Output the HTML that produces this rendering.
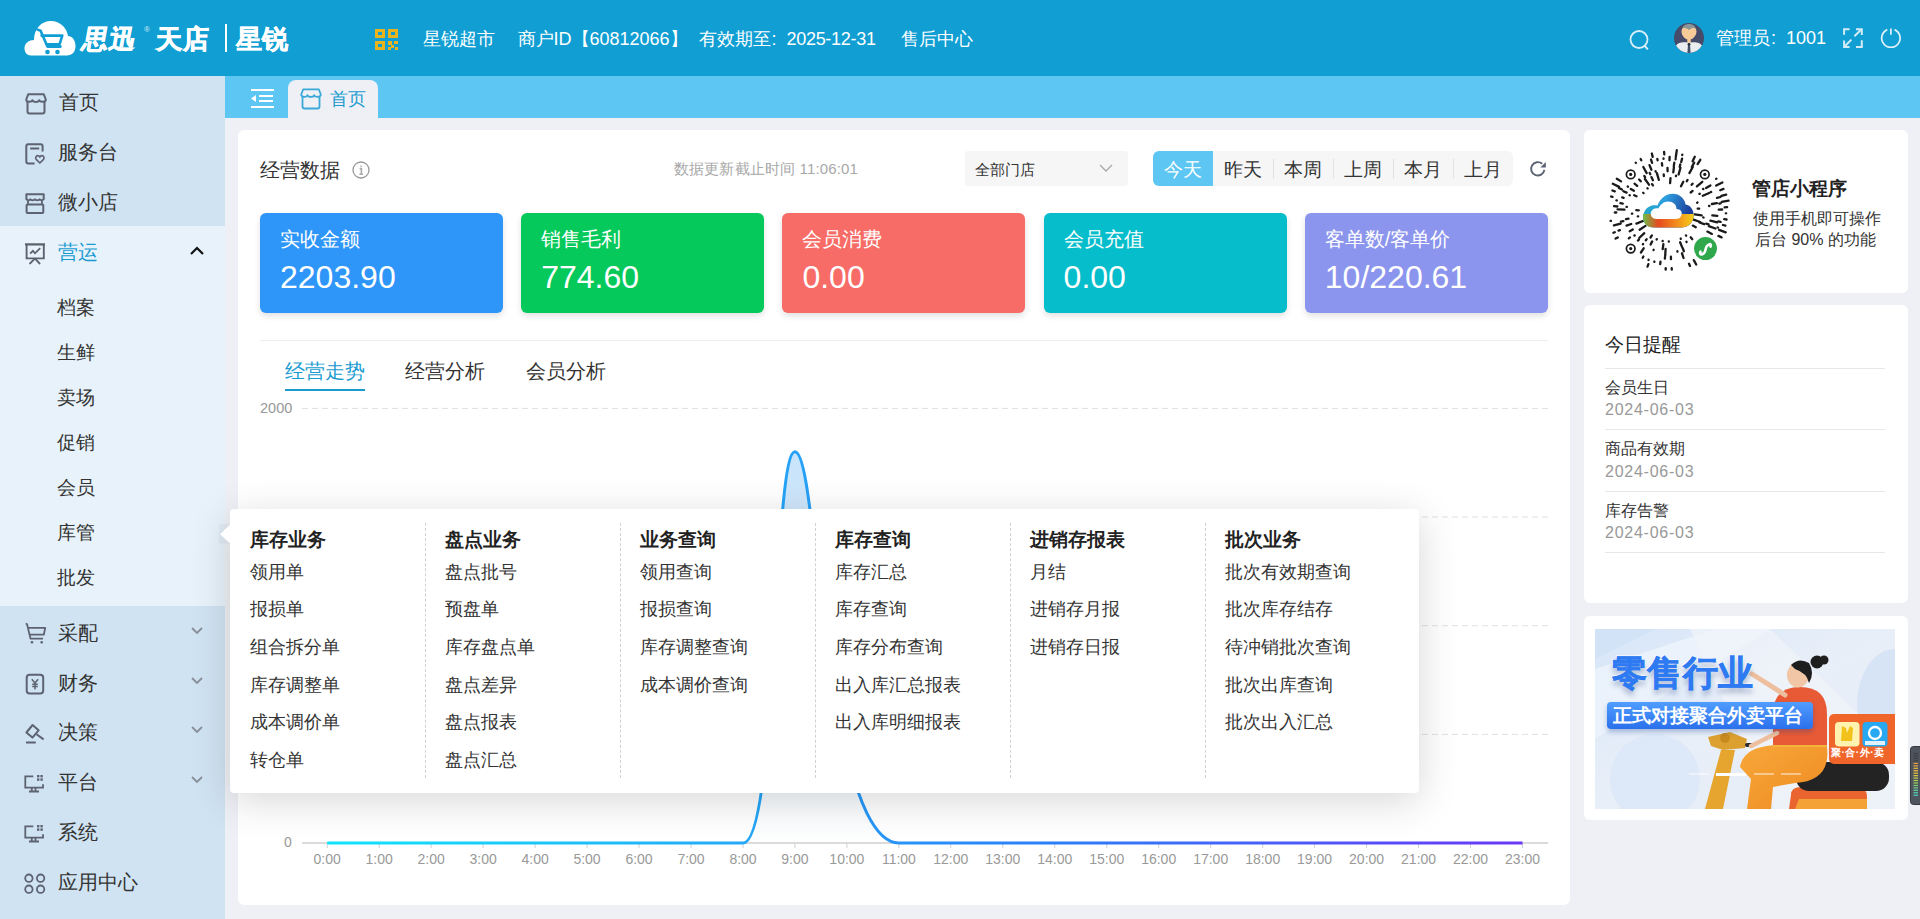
<!DOCTYPE html>
<html><head><meta charset="utf-8"><style>
html,body{margin:0;padding:0;width:1920px;height:919px;overflow:hidden;background:#eef0f5;font-family:"Liberation Sans",sans-serif}
.t{position:absolute;white-space:nowrap}
</style></head><body>
<div style="position:absolute;left:0;top:0;width:1920px;height:76px;background:#109ed3"></div><svg style="position:absolute;left:22px;top:18px" width="58" height="42" viewBox="0 0 58 42">
<path d="M9,37.5 C4,37.5 2.5,33 2.5,30 C2.5,25 7,22 12,22 C12,11 19,3 29,3 C38,3 45,10 46,18 C50,18 53.5,22 53.5,28 C53.5,34 50,37.5 45,37.5 Z" fill="#fff"/>
<path d="M15.5,11.6 L18.6,12.8 L25.4,28.6 H38.5 M19.6,17.6 H40.3 L37.6,26.2 H24.2" fill="none" stroke="#109ed3" stroke-width="2.6" stroke-linejoin="round" stroke-linecap="round"/>
<circle cx="25.5" cy="34" r="2.3" fill="#109ed3"/><circle cx="35.5" cy="34" r="2.3" fill="#109ed3"/>
</svg><div class="t" style="left:83px;top:26.0px;font-size:26px;line-height:26px;color:#fff;font-weight:900;transform:skewX(-10deg);-webkit-text-stroke:0.7px #fff;letter-spacing:1px">思迅</div><div class="t" style="left:144px;top:26.0px;font-size:8px;line-height:8px;color:#d8eef8;font-weight:normal;">®</div><div class="t" style="left:156px;top:26.0px;font-size:26px;line-height:26px;color:#fff;font-weight:900;-webkit-text-stroke:0.7px #fff;letter-spacing:1px">天店</div><div style="position:absolute;left:224.5px;top:24px;width:2.5px;height:28px;background:#fff"></div><div class="t" style="left:236px;top:26.0px;font-size:26px;line-height:26px;color:#fff;font-weight:900;-webkit-text-stroke:0.5px #fff">星锐</div><svg style="position:absolute;left:375px;top:29px" width="23" height="21" viewBox="0 0 23 21">
<g fill="none" stroke="#e8b41e" stroke-width="3"><rect x="1.5" y="1.5" width="7" height="6"/><rect x="14.5" y="1.5" width="7" height="6"/><rect x="1.5" y="13.5" width="7" height="6"/></g>
<rect x="13" y="12" width="4" height="4" fill="#e8b41e"/><rect x="19" y="12" width="4" height="3" fill="#e8b41e"/><rect x="16" y="16" width="3" height="3" fill="#e8b41e"/><rect x="20" y="18" width="3" height="3" fill="#e8b41e"/><rect x="13" y="18" width="3" height="3" fill="#e8b41e"/>
</svg><div class="t" style="left:422.5px;top:30.0px;font-size:18px;line-height:18px;color:#fff;font-weight:normal;">星锐超市</div><div class="t" style="left:517.5px;top:30.0px;font-size:18px;line-height:18px;color:#fff;font-weight:normal;">商户ID【60812066】</div><div class="t" style="left:698.5px;top:30.0px;font-size:18px;line-height:18px;color:#fff;font-weight:normal;">有效期至<span style="margin-left:1px;margin-right:10px">:</span><span style="letter-spacing:-0.3px">2025-12-31</span></div><div class="t" style="left:900.5px;top:30.0px;font-size:18px;line-height:18px;color:#fff;font-weight:normal;">售后中心</div><svg style="position:absolute;left:1628px;top:28px" width="24" height="24" viewBox="0 0 24 24"><circle cx="11" cy="11.5" r="8.5" fill="none" stroke="#d8eef8" stroke-width="1.8"/><path d="M16.6,17.6 L19.8,21.4" stroke="#d8eef8" stroke-width="2"/></svg><svg style="position:absolute;left:1674px;top:23px" width="30" height="30" viewBox="0 0 30 30">
<defs><clipPath id="av"><circle cx="15" cy="15" r="15"/></clipPath></defs>
<g clip-path="url(#av)"><rect width="30" height="30" fill="#464b69"/>
<path d="M8,7 C8,-1 22,-1 22,7 L22,9 C19,6 11,6 8,9 Z" fill="#8a9794"/>
<path d="M7.5,8.5 C7.5,4.5 11,4 15,7 C19,4 22.5,4.5 22.5,8.5 C22.5,12.5 19,16.7 15,16.7 C11,16.7 7.5,12.5 7.5,8.5 Z" fill="#f7cb98"/>
<rect x="13.3" y="15" width="3.4" height="5" fill="#f7cb98"/>
<path d="M1.5,24 C3,19.5 8,19 13.5,19.5 L15,21 L16.5,19.5 C22,19 27,19.5 28.5,24 C26,29.5 20,31 15,31 C10,31 4,29.5 1.5,24 Z" fill="#e9edef"/>
<path d="M14,21 H16 L16.6,30 H13.4 Z" fill="#415067"/><circle cx="15" cy="21.3" r="1.4" fill="#263040"/>
</g></svg><div class="t" style="left:1716px;top:29.0px;font-size:18px;line-height:18px;color:#fff;font-weight:normal;">管理员<span style="margin-left:1px;margin-right:10px">:</span>1001</div><svg style="position:absolute;left:1842px;top:27px" width="22" height="22" viewBox="0 0 22 22"><g fill="none" stroke="#d3ebf6" stroke-width="2">
<path d="M2.1,7.7 V2.2 H7.6"/><path d="M14,2.2 H19.8 V8"/><path d="M19.8,13.3 V19.9 H14"/><path d="M7.6,19.9 H2.1 V13.6"/><path d="M12.4,9.2 L19,2.8"/><path d="M9.4,12.6 L2.8,19.2"/></g></svg><svg style="position:absolute;left:1879px;top:27px" width="24" height="24" viewBox="0 0 24 24"><g fill="none" stroke="#dff1f9" stroke-width="1.7"><path d="M8.3,2.6 A9.2,9.2 0 1 0 15.5,2.6"/><path d="M11.9,1.4 V7.7"/></g></svg><div style="position:absolute;left:0;top:76px;width:225px;height:843px;background:#d0e3f2"></div><div style="position:absolute;left:0;top:226px;width:225px;height:380px;background:#e7f2fa"></div><svg style="position:absolute;left:24px;top:92px" width="24" height="24"><path d="M2.2,7.5 L4.2,2.3 H19.8 L21.8,7.5 C21.8,10.5 16,10.5 15.2,8.2 C14.5,10.5 9.2,10.5 8.5,8.2 C7.7,10.5 2.2,10.5 2.2,7.5 Z" fill="none" stroke="#5d6371" stroke-width="2" stroke-linejoin="round"/><path d="M3.5,9.8 V19.5 Q3.5,21.5 5.5,21.5 H18.5 Q20.5,21.5 20.5,19.5 V9.8" fill="none" stroke="#5d6371" stroke-width="2"/></svg><div class="t" style="left:59px;top:92.0px;font-size:20px;line-height:20px;color:#333;font-weight:normal;">首页</div><svg style="position:absolute;left:24px;top:142px" width="24" height="24"><path d="M10.6,21.6 H4.3 Q2.3,21.6 2.3,19.6 V4.3 Q2.3,2.3 4.3,2.3 H16.6 Q18.6,2.3 18.6,4.3 V9.6 M6.1,6.6 H15.2" fill="none" stroke="#5d6371" stroke-width="2"/><path d="M15.85,21 L12.2,17.3 C11,15.9 12,13.7 13.8,13.7 C14.8,13.7 15.4,14.3 15.85,15 C16.3,14.3 16.9,13.7 17.9,13.7 C19.7,13.7 20.7,15.9 19.5,17.3 Z" fill="none" stroke="#5d6371" stroke-width="1.7" stroke-linejoin="round"/></svg><div class="t" style="left:58px;top:142.0px;font-size:20px;line-height:20px;color:#333;font-weight:normal;">服务台</div><svg style="position:absolute;left:24px;top:192px" width="24" height="24"><path d="M2.4,7.2 V2.3 H19.7 V7.2 C18.5,8.6 16.6,8.6 15.7,7.3 C14.8,8.6 11.9,8.6 11,7.3 C10.1,8.6 7.3,8.6 6.4,7.3 C5.5,8.6 3.4,8.6 2.4,7.2 Z" fill="none" stroke="#5d6371" stroke-width="2" stroke-linejoin="round"/><path d="M4,8.5 V12.5 M17.9,8.5 V12.5" stroke="#5d6371" stroke-width="1.8"/><rect x="2.6" y="12.4" width="16.7" height="8.7" rx="0.8" fill="none" stroke="#5d6371" stroke-width="2"/></svg><div class="t" style="left:58px;top:192.0px;font-size:20px;line-height:20px;color:#333;font-weight:normal;">微小店</div><svg style="position:absolute;left:24px;top:242px" width="24" height="24"><path d="M1,2.4 H21" stroke="#5d6371" stroke-width="2.3"/><path d="M2.6,3 V16.4 H19.8 V3" fill="none" stroke="#5d6371" stroke-width="1.9"/><path d="M6.1,11.7 L8.9,8.9 L11,11.3 L16.2,6.1" fill="none" stroke="#5d6371" stroke-width="1.8"/><path d="M10.6,16.9 L6.1,21.4 M11.3,16.9 L15.5,21.4" stroke="#5d6371" stroke-width="2" stroke-linecap="round"/></svg><div class="t" style="left:58px;top:242.0px;font-size:20px;line-height:20px;color:#1a9bd0;font-weight:normal;">营运</div><svg style="position:absolute;left:189px;top:245px" width="16" height="12" viewBox="0 0 16 12"><path d="M2,9 L8,3 L14,9" fill="none" stroke="#111" stroke-width="2.2"/></svg><div class="t" style="left:57px;top:297.5px;font-size:19px;line-height:19px;color:#333;font-weight:normal;">档案</div><div class="t" style="left:57px;top:342.5px;font-size:19px;line-height:19px;color:#333;font-weight:normal;">生鲜</div><div class="t" style="left:57px;top:387.5px;font-size:19px;line-height:19px;color:#333;font-weight:normal;">卖场</div><div class="t" style="left:57px;top:432.5px;font-size:19px;line-height:19px;color:#333;font-weight:normal;">促销</div><div class="t" style="left:57px;top:477.5px;font-size:19px;line-height:19px;color:#333;font-weight:normal;">会员</div><div class="t" style="left:57px;top:522.5px;font-size:19px;line-height:19px;color:#333;font-weight:normal;">库管</div><div class="t" style="left:57px;top:567.5px;font-size:19px;line-height:19px;color:#333;font-weight:normal;">批发</div><svg style="position:absolute;left:24px;top:621px" width="24" height="24"><path d="M1.7,2.6 L3,3 L6.5,17.6 H19 M4.5,6.8 H21.2 L19.8,13.7 H6.2" fill="none" stroke="#5d6371" stroke-width="1.8" stroke-linejoin="round"/><circle cx="8" cy="21.3" r="1.3" fill="#5d6371"/><circle cx="17.7" cy="21.3" r="1.3" fill="#5d6371"/></svg><div class="t" style="left:58px;top:623.0px;font-size:20px;line-height:20px;color:#333;font-weight:normal;">采配</div><svg style="position:absolute;left:189px;top:624px" width="16" height="12" viewBox="0 0 16 12"><path d="M3,4 L8,9 L13,4" fill="none" stroke="#8a9099" stroke-width="1.8"/></svg><svg style="position:absolute;left:24px;top:672px" width="24" height="24"><rect x="2.7" y="2.8" width="16.5" height="18.6" rx="3" fill="none" stroke="#5d6371" stroke-width="2"/><path d="M7.8,7.2 L11,11 L14.1,7.2 M11,11 V17.5 M8.2,12.2 H13.8 M8.2,14.6 H13.8" fill="none" stroke="#5d6371" stroke-width="1.5"/></svg><div class="t" style="left:58px;top:673.0px;font-size:20px;line-height:20px;color:#333;font-weight:normal;">财务</div><svg style="position:absolute;left:189px;top:674px" width="16" height="12" viewBox="0 0 16 12"><path d="M3,4 L8,9 L13,4" fill="none" stroke="#8a9099" stroke-width="1.8"/></svg><svg style="position:absolute;left:24px;top:720px" width="24" height="24"><path d="M8.6,5 L14.6,10.3 L8.4,17.6 L2.4,12.5 Z" fill="none" stroke="#5d6371" stroke-width="2" stroke-linejoin="round"/><path d="M12.5,14.3 L19.6,19.4 M2,22.4 H11.8" stroke="#5d6371" stroke-width="2"/></svg><div class="t" style="left:58px;top:722.0px;font-size:20px;line-height:20px;color:#333;font-weight:normal;">决策</div><svg style="position:absolute;left:189px;top:723px" width="16" height="12" viewBox="0 0 16 12"><path d="M3,4 L8,9 L13,4" fill="none" stroke="#8a9099" stroke-width="1.8"/></svg><svg style="position:absolute;left:24px;top:774px" width="24" height="24"><path d="M9.3,2.3 H1.3 V13.6 H19 V10.2 M7.8,13.6 V17.5 M11.5,13.6 V17.5 M5,17.5 H15" fill="none" stroke="#5d6371" stroke-width="1.8"/><rect x="13" y="1" width="2.4" height="2.4" fill="#5d6371"/><rect x="16.4" y="1" width="2.4" height="2.4" fill="#5d6371"/><rect x="13" y="4.4" width="2.4" height="2.4" fill="#5d6371"/><rect x="16.4" y="4.4" width="2.4" height="2.4" fill="#5d6371"/></svg><div class="t" style="left:58px;top:772.0px;font-size:20px;line-height:20px;color:#333;font-weight:normal;">平台</div><svg style="position:absolute;left:189px;top:773px" width="16" height="12" viewBox="0 0 16 12"><path d="M3,4 L8,9 L13,4" fill="none" stroke="#8a9099" stroke-width="1.8"/></svg><svg style="position:absolute;left:24px;top:824px" width="24" height="24"><path d="M9.3,2.3 H1.3 V13.6 H19 V10.2 M7.8,13.6 V17.5 M11.5,13.6 V17.5 M5,17.5 H15" fill="none" stroke="#5d6371" stroke-width="1.8"/><rect x="13" y="1" width="2.4" height="2.4" fill="#5d6371"/><rect x="16.4" y="1" width="2.4" height="2.4" fill="#5d6371"/><rect x="13" y="4.4" width="2.4" height="2.4" fill="#5d6371"/><rect x="16.4" y="4.4" width="2.4" height="2.4" fill="#5d6371"/></svg><div class="t" style="left:58px;top:822.0px;font-size:20px;line-height:20px;color:#333;font-weight:normal;">系统</div><svg style="position:absolute;left:24px;top:872px" width="24" height="24"><circle cx="4.9" cy="6.2" r="3.7" fill="none" stroke="#5d6371" stroke-width="1.8"/><circle cx="16.6" cy="6.2" r="3.7" fill="none" stroke="#5d6371" stroke-width="1.8"/><circle cx="4.9" cy="17.2" r="3.7" fill="none" stroke="#5d6371" stroke-width="1.8"/><circle cx="16.6" cy="17.2" r="3.7" fill="none" stroke="#5d6371" stroke-width="1.8"/></svg><div class="t" style="left:58px;top:872.0px;font-size:20px;line-height:20px;color:#333;font-weight:normal;">应用中心</div><div style="position:absolute;left:225px;top:76px;width:1695px;height:42px;background:#5dc6f3"></div><svg style="position:absolute;left:250px;top:88px" width="26" height="22" viewBox="0 0 26 22"><g fill="#fff">
<rect x="1" y="1" width="23" height="2"/><rect x="9" y="7" width="14" height="2"/><rect x="9" y="12" width="14" height="2"/><rect x="1" y="18" width="23" height="2"/><path d="M1,10.5 L6,7 V14Z"/></g></svg><div style="position:absolute;left:288px;top:80px;width:90px;height:38px;background:#eef0f5;border-radius:8px 8px 0 0"></div><svg style="position:absolute;left:299px;top:87px" width="24" height="24"><path d="M2.2,7.5 L4.2,2.3 H19.8 L21.8,7.5 C21.8,10.5 16,10.5 15.2,8.2 C14.5,10.5 9.2,10.5 8.5,8.2 C7.7,10.5 2.2,10.5 2.2,7.5 Z" fill="none" stroke="#3aa8d8" stroke-width="1.8" stroke-linejoin="round"/><path d="M3.5,9.8 V19.5 Q3.5,21.5 5.5,21.5 H18.5 Q20.5,21.5 20.5,19.5 V9.8" fill="none" stroke="#3aa8d8" stroke-width="1.8"/></svg><div class="t" style="left:330px;top:90.0px;font-size:18px;line-height:18px;color:#1a9bd0;font-weight:normal;">首页</div><div style="position:absolute;left:225px;top:118px;width:1695px;height:801px;background:#eef0f5"></div><div style="position:absolute;left:238px;top:130px;width:1332px;height:775px;background:#fff;border-radius:6px"></div><div class="t" style="left:260px;top:160.0px;font-size:20px;line-height:20px;color:#333;font-weight:normal;">经营数据</div><svg style="position:absolute;left:352px;top:161px" width="18" height="18" viewBox="0 0 18 18"><circle cx="9" cy="9" r="8" fill="none" stroke="#999" stroke-width="1.3"/><circle cx="9" cy="5.2" r="0.9" fill="#bbb"/><path d="M7.6,7.6 H9.4 V13.2 M7.4,13.2 H11" fill="none" stroke="#aaa" stroke-width="1.6"/></svg><div class="t" style="left:674px;top:161.0px;font-size:15px;line-height:15px;color:#a8a8a8;font-weight:normal;letter-spacing:0.15px">数据更新截止时间 11:06:01</div><div style="position:absolute;left:965px;top:151px;width:163px;height:35px;background:#f6f6f7;border-radius:3px"></div><div class="t" style="left:975px;top:161.5px;font-size:15px;line-height:15px;color:#333;font-weight:normal;">全部门店</div><svg style="position:absolute;left:1098px;top:161px" width="16" height="14" viewBox="0 0 16 14"><path d="M2,4 L8,10 L14,4" fill="none" stroke="#aaa" stroke-width="1.4"/></svg><div style="position:absolute;left:1153px;top:151px;width:360px;height:35px;background:#f6f6f7;border-radius:6px"></div><div style="position:absolute;left:1153px;top:151px;width:60px;height:35px;background:#5dc6f3;border-radius:6px 0 0 6px"></div><div class="t" style="left:1153px;top:152px;width:60px;text-align:center;font-size:19px;line-height:35px;color:#fff">今天</div><div class="t" style="left:1213px;top:152px;width:60px;text-align:center;font-size:19px;line-height:35px;color:#333">昨天</div><div class="t" style="left:1273px;top:152px;width:60px;text-align:center;font-size:19px;line-height:35px;color:#333">本周</div><div style="position:absolute;left:1273px;top:159px;width:1px;height:20px;background:#e2e2e2"></div><div class="t" style="left:1333px;top:152px;width:60px;text-align:center;font-size:19px;line-height:35px;color:#333">上周</div><div style="position:absolute;left:1333px;top:159px;width:1px;height:20px;background:#e2e2e2"></div><div class="t" style="left:1393px;top:152px;width:60px;text-align:center;font-size:19px;line-height:35px;color:#333">本月</div><div style="position:absolute;left:1393px;top:159px;width:1px;height:20px;background:#e2e2e2"></div><div class="t" style="left:1453px;top:152px;width:60px;text-align:center;font-size:19px;line-height:35px;color:#333">上月</div><div style="position:absolute;left:1453px;top:159px;width:1px;height:20px;background:#e2e2e2"></div><svg style="position:absolute;left:1528px;top:160px" width="20" height="20" viewBox="0 0 20 20"><path d="M16.4,9.9 A6.7,6.7 0 1 1 14.2,3.8" fill="none" stroke="#5b6373" stroke-width="1.9"/><path d="M12.3,7.5 L17.8,7.5 L17.8,2.1 Z" fill="#5b6373"/></svg><div style="position:absolute;left:260.0px;top:213px;width:243px;height:100px;background:#2e96f8;border-radius:6px;box-shadow:0 3px 6px rgba(0,0,0,0.12)"></div><div class="t" style="left:280.0px;top:229.0px;font-size:20px;line-height:20px;color:#fff;font-weight:normal;">实收金额</div><div class="t" style="left:280.0px;top:261.0px;font-size:32px;line-height:32px;color:#fff;font-weight:normal;">2203.90</div><div style="position:absolute;left:521.2px;top:213px;width:243px;height:100px;background:#06c95b;border-radius:6px;box-shadow:0 3px 6px rgba(0,0,0,0.12)"></div><div class="t" style="left:541.2px;top:229.0px;font-size:20px;line-height:20px;color:#fff;font-weight:normal;">销售毛利</div><div class="t" style="left:541.2px;top:261.0px;font-size:32px;line-height:32px;color:#fff;font-weight:normal;">774.60</div><div style="position:absolute;left:782.4px;top:213px;width:243px;height:100px;background:#f76c66;border-radius:6px;box-shadow:0 3px 6px rgba(0,0,0,0.12)"></div><div class="t" style="left:802.4px;top:229.0px;font-size:20px;line-height:20px;color:#fff;font-weight:normal;">会员消费</div><div class="t" style="left:802.4px;top:261.0px;font-size:32px;line-height:32px;color:#fff;font-weight:normal;">0.00</div><div style="position:absolute;left:1043.6px;top:213px;width:243px;height:100px;background:#06bdcb;border-radius:6px;box-shadow:0 3px 6px rgba(0,0,0,0.12)"></div><div class="t" style="left:1063.6px;top:229.0px;font-size:20px;line-height:20px;color:#fff;font-weight:normal;">会员充值</div><div class="t" style="left:1063.6px;top:261.0px;font-size:32px;line-height:32px;color:#fff;font-weight:normal;">0.00</div><div style="position:absolute;left:1304.8px;top:213px;width:243px;height:100px;background:#8b95ed;border-radius:6px;box-shadow:0 3px 6px rgba(0,0,0,0.12)"></div><div class="t" style="left:1324.8px;top:229.0px;font-size:20px;line-height:20px;color:#fff;font-weight:normal;">客单数/客单价</div><div class="t" style="left:1324.8px;top:261.0px;font-size:32px;line-height:32px;color:#fff;font-weight:normal;">10/220.61</div><div style="position:absolute;left:260px;top:340px;width:1288px;height:1px;background:#ececec"></div><div class="t" style="left:285px;top:361.0px;font-size:20px;line-height:20px;color:#1a9bd0;font-weight:normal;">经营走势</div><div style="position:absolute;left:285px;top:388.5px;width:80px;height:2.5px;background:#1a9bd0"></div><div class="t" style="left:405px;top:361.0px;font-size:20px;line-height:20px;color:#333;font-weight:normal;">经营分析</div><div class="t" style="left:526px;top:361.0px;font-size:20px;line-height:20px;color:#333;font-weight:normal;">会员分析</div><svg style="position:absolute;left:0;top:0" width="1920" height="919"><defs><linearGradient id="lg" x1="327" y1="0" x2="1523" y2="0" gradientUnits="userSpaceOnUse"><stop offset="0" stop-color="#10e4fa"/><stop offset="0.35" stop-color="#25a8f7"/><stop offset="0.6" stop-color="#2a80f8"/><stop offset="1" stop-color="#6a38f6"/></linearGradient><linearGradient id="ag" x1="0" y1="449" x2="0" y2="843" gradientUnits="userSpaceOnUse"><stop offset="0" stop-color="#b9dcfa" stop-opacity="0.8"/><stop offset="1" stop-color="#b9dcfa" stop-opacity="0.0"/></linearGradient></defs><line x1="302" y1="734.4" x2="1548" y2="734.4" stroke="#e0e0e0" stroke-width="1" stroke-dasharray="6,4"/><line x1="302" y1="625.7" x2="1548" y2="625.7" stroke="#e0e0e0" stroke-width="1" stroke-dasharray="6,4"/><line x1="302" y1="517.0" x2="1548" y2="517.0" stroke="#e0e0e0" stroke-width="1" stroke-dasharray="6,4"/><line x1="302" y1="408.4" x2="1548" y2="408.4" stroke="#e0e0e0" stroke-width="1" stroke-dasharray="6,4"/><line x1="302" y1="843.0" x2="1548" y2="843.0" stroke="#cfcfcf" stroke-width="1.5"/><line x1="327.2" y1="843.0" x2="327.2" y2="848.0" stroke="#cfcfcf" stroke-width="1"/><line x1="379.2" y1="843.0" x2="379.2" y2="848.0" stroke="#cfcfcf" stroke-width="1"/><line x1="431.1" y1="843.0" x2="431.1" y2="848.0" stroke="#cfcfcf" stroke-width="1"/><line x1="483.1" y1="843.0" x2="483.1" y2="848.0" stroke="#cfcfcf" stroke-width="1"/><line x1="535.1" y1="843.0" x2="535.1" y2="848.0" stroke="#cfcfcf" stroke-width="1"/><line x1="587.0" y1="843.0" x2="587.0" y2="848.0" stroke="#cfcfcf" stroke-width="1"/><line x1="639.0" y1="843.0" x2="639.0" y2="848.0" stroke="#cfcfcf" stroke-width="1"/><line x1="691.0" y1="843.0" x2="691.0" y2="848.0" stroke="#cfcfcf" stroke-width="1"/><line x1="743.0" y1="843.0" x2="743.0" y2="848.0" stroke="#cfcfcf" stroke-width="1"/><line x1="794.9" y1="843.0" x2="794.9" y2="848.0" stroke="#cfcfcf" stroke-width="1"/><line x1="846.9" y1="843.0" x2="846.9" y2="848.0" stroke="#cfcfcf" stroke-width="1"/><line x1="898.9" y1="843.0" x2="898.9" y2="848.0" stroke="#cfcfcf" stroke-width="1"/><line x1="950.8" y1="843.0" x2="950.8" y2="848.0" stroke="#cfcfcf" stroke-width="1"/><line x1="1002.8" y1="843.0" x2="1002.8" y2="848.0" stroke="#cfcfcf" stroke-width="1"/><line x1="1054.8" y1="843.0" x2="1054.8" y2="848.0" stroke="#cfcfcf" stroke-width="1"/><line x1="1106.8" y1="843.0" x2="1106.8" y2="848.0" stroke="#cfcfcf" stroke-width="1"/><line x1="1158.7" y1="843.0" x2="1158.7" y2="848.0" stroke="#cfcfcf" stroke-width="1"/><line x1="1210.7" y1="843.0" x2="1210.7" y2="848.0" stroke="#cfcfcf" stroke-width="1"/><line x1="1262.7" y1="843.0" x2="1262.7" y2="848.0" stroke="#cfcfcf" stroke-width="1"/><line x1="1314.6" y1="843.0" x2="1314.6" y2="848.0" stroke="#cfcfcf" stroke-width="1"/><line x1="1366.6" y1="843.0" x2="1366.6" y2="848.0" stroke="#cfcfcf" stroke-width="1"/><line x1="1418.6" y1="843.0" x2="1418.6" y2="848.0" stroke="#cfcfcf" stroke-width="1"/><line x1="1470.5" y1="843.0" x2="1470.5" y2="848.0" stroke="#cfcfcf" stroke-width="1"/><line x1="1522.5" y1="843.0" x2="1522.5" y2="848.0" stroke="#cfcfcf" stroke-width="1"/><path d="M327.20,843.00 C327.20,843.00 359.42,843.00 379.17,843.00 C398.92,843.00 411.39,843.00 431.14,843.00 C450.89,843.00 463.36,843.00 483.11,843.00 C502.86,843.00 515.33,843.00 535.08,843.00 C554.83,843.00 567.30,843.00 587.05,843.00 C606.80,843.00 619.27,843.00 639.02,843.00 C658.77,843.00 671.24,843.00 690.99,843.00 C710.74,843.00 738.36,843.00 742.96,843.00 C777.86,843.00 772.73,451.86 794.93,451.86 C812.23,451.86 817.25,643.43 846.90,754.99 C856.75,792.07 872.69,843.00 898.87,843.00 C912.18,843.00 931.09,843.00 950.84,843.00 C970.59,843.00 983.06,843.00 1002.81,843.00 C1022.56,843.00 1035.03,843.00 1054.78,843.00 C1074.53,843.00 1087.00,843.00 1106.75,843.00 C1126.50,843.00 1138.97,843.00 1158.72,843.00 C1178.47,843.00 1190.94,843.00 1210.69,843.00 C1230.44,843.00 1242.91,843.00 1262.66,843.00 C1282.41,843.00 1294.88,843.00 1314.63,843.00 C1334.38,843.00 1346.85,843.00 1366.60,843.00 C1386.35,843.00 1398.82,843.00 1418.57,843.00 C1438.32,843.00 1450.79,843.00 1470.54,843.00 C1490.29,843.00 1522.51,843.00 1522.51,843.00 L1522.5,843.0 L327.2,843.0 Z" fill="url(#ag)"/><path d="M327.20,843.00 C327.20,843.00 359.42,843.00 379.17,843.00 C398.92,843.00 411.39,843.00 431.14,843.00 C450.89,843.00 463.36,843.00 483.11,843.00 C502.86,843.00 515.33,843.00 535.08,843.00 C554.83,843.00 567.30,843.00 587.05,843.00 C606.80,843.00 619.27,843.00 639.02,843.00 C658.77,843.00 671.24,843.00 690.99,843.00 C710.74,843.00 738.36,843.00 742.96,843.00 C777.86,843.00 772.73,451.86 794.93,451.86 C812.23,451.86 817.25,643.43 846.90,754.99 C856.75,792.07 872.69,843.00 898.87,843.00 C912.18,843.00 931.09,843.00 950.84,843.00 C970.59,843.00 983.06,843.00 1002.81,843.00 C1022.56,843.00 1035.03,843.00 1054.78,843.00 C1074.53,843.00 1087.00,843.00 1106.75,843.00 C1126.50,843.00 1138.97,843.00 1158.72,843.00 C1178.47,843.00 1190.94,843.00 1210.69,843.00 C1230.44,843.00 1242.91,843.00 1262.66,843.00 C1282.41,843.00 1294.88,843.00 1314.63,843.00 C1334.38,843.00 1346.85,843.00 1366.60,843.00 C1386.35,843.00 1398.82,843.00 1418.57,843.00 C1438.32,843.00 1450.79,843.00 1470.54,843.00 C1490.29,843.00 1522.51,843.00 1522.51,843.00" fill="none" stroke="url(#lg)" stroke-width="3"/></svg><div class="t" style="left:260px;top:401.2px;font-size:14.5px;line-height:14.5px;color:#999;font-weight:normal;">2000</div><div class="t" style="left:284px;top:835.0px;font-size:14px;line-height:14px;color:#999;font-weight:normal;">0</div><div class="t" style="left:297.2px;top:851px;width:60px;text-align:center;font-size:14px;line-height:16px;color:#999">0:00</div><div class="t" style="left:349.2px;top:851px;width:60px;text-align:center;font-size:14px;line-height:16px;color:#999">1:00</div><div class="t" style="left:401.1px;top:851px;width:60px;text-align:center;font-size:14px;line-height:16px;color:#999">2:00</div><div class="t" style="left:453.1px;top:851px;width:60px;text-align:center;font-size:14px;line-height:16px;color:#999">3:00</div><div class="t" style="left:505.1px;top:851px;width:60px;text-align:center;font-size:14px;line-height:16px;color:#999">4:00</div><div class="t" style="left:557.0px;top:851px;width:60px;text-align:center;font-size:14px;line-height:16px;color:#999">5:00</div><div class="t" style="left:609.0px;top:851px;width:60px;text-align:center;font-size:14px;line-height:16px;color:#999">6:00</div><div class="t" style="left:661.0px;top:851px;width:60px;text-align:center;font-size:14px;line-height:16px;color:#999">7:00</div><div class="t" style="left:713.0px;top:851px;width:60px;text-align:center;font-size:14px;line-height:16px;color:#999">8:00</div><div class="t" style="left:764.9px;top:851px;width:60px;text-align:center;font-size:14px;line-height:16px;color:#999">9:00</div><div class="t" style="left:816.9px;top:851px;width:60px;text-align:center;font-size:14px;line-height:16px;color:#999">10:00</div><div class="t" style="left:868.9px;top:851px;width:60px;text-align:center;font-size:14px;line-height:16px;color:#999">11:00</div><div class="t" style="left:920.8px;top:851px;width:60px;text-align:center;font-size:14px;line-height:16px;color:#999">12:00</div><div class="t" style="left:972.8px;top:851px;width:60px;text-align:center;font-size:14px;line-height:16px;color:#999">13:00</div><div class="t" style="left:1024.8px;top:851px;width:60px;text-align:center;font-size:14px;line-height:16px;color:#999">14:00</div><div class="t" style="left:1076.8px;top:851px;width:60px;text-align:center;font-size:14px;line-height:16px;color:#999">15:00</div><div class="t" style="left:1128.7px;top:851px;width:60px;text-align:center;font-size:14px;line-height:16px;color:#999">16:00</div><div class="t" style="left:1180.7px;top:851px;width:60px;text-align:center;font-size:14px;line-height:16px;color:#999">17:00</div><div class="t" style="left:1232.7px;top:851px;width:60px;text-align:center;font-size:14px;line-height:16px;color:#999">18:00</div><div class="t" style="left:1284.6px;top:851px;width:60px;text-align:center;font-size:14px;line-height:16px;color:#999">19:00</div><div class="t" style="left:1336.6px;top:851px;width:60px;text-align:center;font-size:14px;line-height:16px;color:#999">20:00</div><div class="t" style="left:1388.6px;top:851px;width:60px;text-align:center;font-size:14px;line-height:16px;color:#999">21:00</div><div class="t" style="left:1440.5px;top:851px;width:60px;text-align:center;font-size:14px;line-height:16px;color:#999">22:00</div><div class="t" style="left:1492.5px;top:851px;width:60px;text-align:center;font-size:14px;line-height:16px;color:#999">23:00</div><div style="position:absolute;left:1584px;top:130px;width:324px;height:163px;background:#fff;border-radius:6px"></div><div style="position:absolute;left:1584px;top:305px;width:324px;height:298px;background:#fff;border-radius:6px"></div><div style="position:absolute;left:1584px;top:616px;width:324px;height:204px;background:#fff;border-radius:6px"></div><div class="t" style="left:1752px;top:178.5px;font-size:19px;line-height:19px;color:#222;font-weight:bold;">管店小程序</div><div class="t" style="left:1753px;top:211.0px;font-size:16px;line-height:16px;color:#333;font-weight:normal;">使用手机即可操作</div><div class="t" style="left:1755px;top:232.0px;font-size:16px;line-height:16px;color:#333;font-weight:normal;">后台 90% 的功能</div><div class="t" style="left:1605px;top:335.0px;font-size:19px;line-height:19px;color:#222;font-weight:normal;">今日提醒</div><div style="position:absolute;left:1605px;top:368px;width:280px;height:1px;background:#e8e8e8"></div><div class="t" style="left:1605px;top:379.5px;font-size:16px;line-height:16px;color:#333;font-weight:normal;">会员生日</div><div class="t" style="left:1605px;top:402.0px;font-size:16px;line-height:16px;color:#999;font-weight:normal;letter-spacing:0.75px">2024-06-03</div><div style="position:absolute;left:1605px;top:429px;width:280px;height:1px;background:#e8e8e8"></div><div class="t" style="left:1605px;top:441.0px;font-size:16px;line-height:16px;color:#333;font-weight:normal;">商品有效期</div><div class="t" style="left:1605px;top:463.5px;font-size:16px;line-height:16px;color:#999;font-weight:normal;letter-spacing:0.75px">2024-06-03</div><div style="position:absolute;left:1605px;top:491px;width:280px;height:1px;background:#e8e8e8"></div><div class="t" style="left:1605px;top:502.5px;font-size:16px;line-height:16px;color:#333;font-weight:normal;">库存告警</div><div class="t" style="left:1605px;top:525.0px;font-size:16px;line-height:16px;color:#999;font-weight:normal;letter-spacing:0.75px">2024-06-03</div><div style="position:absolute;left:1605px;top:552px;width:280px;height:1px;background:#e8e8e8"></div><svg style="position:absolute;left:1602px;top:145px" width="132" height="132" viewBox="1601.5 145 132 132"><line x1="1694.3" y1="214.4" x2="1701.2" y2="215.3" stroke="#1a1a1a" stroke-width="2.3" stroke-linecap="round"/><line x1="1693.1" y1="219.7" x2="1699.7" y2="222.0" stroke="#1a1a1a" stroke-width="2.3" stroke-linecap="round"/><line x1="1692.3" y1="225.6" x2="1695.3" y2="227.3" stroke="#1a1a1a" stroke-width="2.3" stroke-linecap="round"/><line x1="1685.4" y1="235.4" x2="1685.7" y2="235.7" stroke="#1a1a1a" stroke-width="2.3" stroke-linecap="round"/><line x1="1680.2" y1="238.5" x2="1680.3" y2="238.9" stroke="#1a1a1a" stroke-width="2.3" stroke-linecap="round"/><line x1="1668.3" y1="241.3" x2="1668.3" y2="241.7" stroke="#1a1a1a" stroke-width="2.3" stroke-linecap="round"/><line x1="1662.2" y1="240.8" x2="1662.1" y2="241.2" stroke="#1a1a1a" stroke-width="2.3" stroke-linecap="round"/><line x1="1656.3" y1="239.1" x2="1656.1" y2="239.5" stroke="#1a1a1a" stroke-width="2.3" stroke-linecap="round"/><line x1="1651.4" y1="235.4" x2="1650.0" y2="237.5" stroke="#1a1a1a" stroke-width="2.3" stroke-linecap="round"/><line x1="1645.0" y1="225.9" x2="1639.1" y2="229.7" stroke="#1a1a1a" stroke-width="2.3" stroke-linecap="round"/><line x1="1642.4" y1="221.0" x2="1635.9" y2="223.6" stroke="#1a1a1a" stroke-width="2.3" stroke-linecap="round"/><line x1="1637.7" y1="216.4" x2="1637.3" y2="216.4" stroke="#1a1a1a" stroke-width="2.3" stroke-linecap="round"/><line x1="1638.3" y1="210.3" x2="1635.8" y2="210.2" stroke="#1a1a1a" stroke-width="2.3" stroke-linecap="round"/><line x1="1643.1" y1="193.1" x2="1642.7" y2="192.8" stroke="#1a1a1a" stroke-width="2.3" stroke-linecap="round"/><line x1="1647.2" y1="188.5" x2="1646.9" y2="188.2" stroke="#1a1a1a" stroke-width="2.3" stroke-linecap="round"/><line x1="1652.4" y1="185.4" x2="1651.6" y2="184.1" stroke="#1a1a1a" stroke-width="2.3" stroke-linecap="round"/><line x1="1669.6" y1="183.1" x2="1670.0" y2="178.1" stroke="#1a1a1a" stroke-width="2.3" stroke-linecap="round"/><line x1="1680.5" y1="186.2" x2="1682.8" y2="181.7" stroke="#1a1a1a" stroke-width="2.3" stroke-linecap="round"/><line x1="1690.2" y1="192.5" x2="1692.1" y2="190.9" stroke="#1a1a1a" stroke-width="2.3" stroke-linecap="round"/><line x1="1696.6" y1="202.7" x2="1697.0" y2="202.5" stroke="#1a1a1a" stroke-width="2.3" stroke-linecap="round"/><line x1="1697.2" y1="208.7" x2="1698.7" y2="208.6" stroke="#1a1a1a" stroke-width="2.3" stroke-linecap="round"/><line x1="1702.7" y1="217.4" x2="1703.1" y2="217.5" stroke="#1a1a1a" stroke-width="2.3" stroke-linecap="round"/><line x1="1699.0" y1="222.5" x2="1703.7" y2="224.2" stroke="#1a1a1a" stroke-width="2.3" stroke-linecap="round"/><line x1="1690.2" y1="237.3" x2="1691.8" y2="239.2" stroke="#1a1a1a" stroke-width="2.3" stroke-linecap="round"/><line x1="1685.9" y1="241.7" x2="1686.1" y2="242.0" stroke="#1a1a1a" stroke-width="2.3" stroke-linecap="round"/><line x1="1679.6" y1="242.2" x2="1681.5" y2="246.9" stroke="#1a1a1a" stroke-width="2.3" stroke-linecap="round"/><line x1="1662.9" y1="244.2" x2="1662.2" y2="249.1" stroke="#1a1a1a" stroke-width="2.3" stroke-linecap="round"/><line x1="1651.7" y1="241.4" x2="1650.1" y2="244.5" stroke="#1a1a1a" stroke-width="2.3" stroke-linecap="round"/><line x1="1646.2" y1="239.1" x2="1645.3" y2="240.3" stroke="#1a1a1a" stroke-width="2.3" stroke-linecap="round"/><line x1="1643.8" y1="233.2" x2="1638.7" y2="238.0" stroke="#1a1a1a" stroke-width="2.3" stroke-linecap="round"/><line x1="1631.8" y1="213.6" x2="1631.4" y2="213.7" stroke="#1a1a1a" stroke-width="2.3" stroke-linecap="round"/><line x1="1636.0" y1="196.3" x2="1633.7" y2="195.3" stroke="#1a1a1a" stroke-width="2.3" stroke-linecap="round"/><line x1="1648.5" y1="184.7" x2="1644.4" y2="179.0" stroke="#1a1a1a" stroke-width="2.3" stroke-linecap="round"/><line x1="1652.4" y1="180.2" x2="1650.9" y2="177.1" stroke="#1a1a1a" stroke-width="2.3" stroke-linecap="round"/><line x1="1658.3" y1="179.8" x2="1656.4" y2="173.1" stroke="#1a1a1a" stroke-width="2.3" stroke-linecap="round"/><line x1="1663.4" y1="176.0" x2="1663.2" y2="174.5" stroke="#1a1a1a" stroke-width="2.3" stroke-linecap="round"/><line x1="1675.4" y1="176.1" x2="1675.5" y2="175.7" stroke="#1a1a1a" stroke-width="2.3" stroke-linecap="round"/><line x1="1686.3" y1="181.2" x2="1687.1" y2="179.9" stroke="#1a1a1a" stroke-width="2.3" stroke-linecap="round"/><line x1="1691.1" y1="184.8" x2="1692.1" y2="183.7" stroke="#1a1a1a" stroke-width="2.3" stroke-linecap="round"/><line x1="1698.9" y1="193.9" x2="1699.3" y2="193.7" stroke="#1a1a1a" stroke-width="2.3" stroke-linecap="round"/><line x1="1705.7" y1="223.6" x2="1708.1" y2="224.4" stroke="#1a1a1a" stroke-width="2.3" stroke-linecap="round"/><line x1="1682.1" y1="248.0" x2="1683.4" y2="251.2" stroke="#1a1a1a" stroke-width="2.3" stroke-linecap="round"/><line x1="1676.9" y1="251.2" x2="1677.0" y2="251.6" stroke="#1a1a1a" stroke-width="2.3" stroke-linecap="round"/><line x1="1665.1" y1="248.9" x2="1664.7" y2="255.9" stroke="#1a1a1a" stroke-width="2.3" stroke-linecap="round"/><line x1="1653.2" y1="249.7" x2="1653.0" y2="250.1" stroke="#1a1a1a" stroke-width="2.3" stroke-linecap="round"/><line x1="1642.6" y1="244.0" x2="1642.4" y2="244.3" stroke="#1a1a1a" stroke-width="2.3" stroke-linecap="round"/><line x1="1638.5" y1="239.6" x2="1637.4" y2="240.6" stroke="#1a1a1a" stroke-width="2.3" stroke-linecap="round"/><line x1="1634.2" y1="235.4" x2="1633.8" y2="235.6" stroke="#1a1a1a" stroke-width="2.3" stroke-linecap="round"/><line x1="1632.3" y1="229.5" x2="1629.2" y2="231.2" stroke="#1a1a1a" stroke-width="2.3" stroke-linecap="round"/><line x1="1630.7" y1="224.0" x2="1626.0" y2="225.6" stroke="#1a1a1a" stroke-width="2.3" stroke-linecap="round"/><line x1="1628.0" y1="218.7" x2="1625.5" y2="219.2" stroke="#1a1a1a" stroke-width="2.3" stroke-linecap="round"/><line x1="1626.4" y1="206.9" x2="1626.0" y2="206.9" stroke="#1a1a1a" stroke-width="2.3" stroke-linecap="round"/><line x1="1629.3" y1="195.3" x2="1629.0" y2="195.1" stroke="#1a1a1a" stroke-width="2.3" stroke-linecap="round"/><line x1="1633.4" y1="190.7" x2="1630.3" y2="188.9" stroke="#1a1a1a" stroke-width="2.3" stroke-linecap="round"/><line x1="1636.7" y1="185.9" x2="1634.0" y2="183.7" stroke="#1a1a1a" stroke-width="2.3" stroke-linecap="round"/><line x1="1640.3" y1="181.3" x2="1638.6" y2="179.5" stroke="#1a1a1a" stroke-width="2.3" stroke-linecap="round"/><line x1="1644.7" y1="177.3" x2="1643.8" y2="176.0" stroke="#1a1a1a" stroke-width="2.3" stroke-linecap="round"/><line x1="1649.8" y1="174.3" x2="1649.2" y2="172.9" stroke="#1a1a1a" stroke-width="2.3" stroke-linecap="round"/><line x1="1655.2" y1="171.6" x2="1655.1" y2="171.2" stroke="#1a1a1a" stroke-width="2.3" stroke-linecap="round"/><line x1="1667.1" y1="171.3" x2="1667.0" y2="167.8" stroke="#1a1a1a" stroke-width="2.3" stroke-linecap="round"/><line x1="1672.8" y1="172.4" x2="1673.4" y2="167.4" stroke="#1a1a1a" stroke-width="2.3" stroke-linecap="round"/><line x1="1678.1" y1="174.5" x2="1680.0" y2="167.8" stroke="#1a1a1a" stroke-width="2.3" stroke-linecap="round"/><line x1="1696.4" y1="186.4" x2="1701.8" y2="181.8" stroke="#1a1a1a" stroke-width="2.3" stroke-linecap="round"/><line x1="1702.5" y1="189.1" x2="1702.9" y2="188.9" stroke="#1a1a1a" stroke-width="2.3" stroke-linecap="round"/><line x1="1702.3" y1="195.8" x2="1708.7" y2="193.0" stroke="#1a1a1a" stroke-width="2.3" stroke-linecap="round"/><line x1="1708.5" y1="206.0" x2="1708.9" y2="206.0" stroke="#1a1a1a" stroke-width="2.3" stroke-linecap="round"/><line x1="1711.8" y1="215.3" x2="1716.8" y2="215.8" stroke="#1a1a1a" stroke-width="2.3" stroke-linecap="round"/><line x1="1709.9" y1="220.7" x2="1716.7" y2="222.3" stroke="#1a1a1a" stroke-width="2.3" stroke-linecap="round"/><line x1="1708.3" y1="226.1" x2="1714.9" y2="228.5" stroke="#1a1a1a" stroke-width="2.3" stroke-linecap="round"/><line x1="1706.9" y1="231.6" x2="1711.4" y2="233.9" stroke="#1a1a1a" stroke-width="2.3" stroke-linecap="round"/><line x1="1681.5" y1="253.3" x2="1683.0" y2="258.0" stroke="#1a1a1a" stroke-width="2.3" stroke-linecap="round"/><line x1="1670.4" y1="256.7" x2="1670.5" y2="259.2" stroke="#1a1a1a" stroke-width="2.3" stroke-linecap="round"/><line x1="1664.5" y1="257.2" x2="1664.4" y2="258.6" stroke="#1a1a1a" stroke-width="2.3" stroke-linecap="round"/><line x1="1643.2" y1="248.3" x2="1640.4" y2="252.5" stroke="#1a1a1a" stroke-width="2.3" stroke-linecap="round"/><line x1="1629.5" y1="237.4" x2="1628.3" y2="238.3" stroke="#1a1a1a" stroke-width="2.3" stroke-linecap="round"/><line x1="1622.9" y1="221.1" x2="1620.4" y2="221.7" stroke="#1a1a1a" stroke-width="2.3" stroke-linecap="round"/><line x1="1624.0" y1="209.6" x2="1617.0" y2="209.3" stroke="#1a1a1a" stroke-width="2.3" stroke-linecap="round"/><line x1="1622.3" y1="203.6" x2="1619.9" y2="203.2" stroke="#1a1a1a" stroke-width="2.3" stroke-linecap="round"/><line x1="1623.2" y1="197.8" x2="1621.7" y2="197.4" stroke="#1a1a1a" stroke-width="2.3" stroke-linecap="round"/><line x1="1626.1" y1="192.6" x2="1622.9" y2="191.2" stroke="#1a1a1a" stroke-width="2.3" stroke-linecap="round"/><line x1="1627.5" y1="186.7" x2="1627.2" y2="186.5" stroke="#1a1a1a" stroke-width="2.3" stroke-linecap="round"/><line x1="1646.2" y1="173.1" x2="1642.8" y2="167.0" stroke="#1a1a1a" stroke-width="2.3" stroke-linecap="round"/><line x1="1650.9" y1="169.7" x2="1649.0" y2="165.1" stroke="#1a1a1a" stroke-width="2.3" stroke-linecap="round"/><line x1="1661.7" y1="165.6" x2="1661.4" y2="163.1" stroke="#1a1a1a" stroke-width="2.3" stroke-linecap="round"/><line x1="1673.3" y1="166.1" x2="1673.8" y2="162.7" stroke="#1a1a1a" stroke-width="2.3" stroke-linecap="round"/><line x1="1679.2" y1="166.8" x2="1679.8" y2="164.3" stroke="#1a1a1a" stroke-width="2.3" stroke-linecap="round"/><line x1="1688.9" y1="173.1" x2="1692.3" y2="167.0" stroke="#1a1a1a" stroke-width="2.3" stroke-linecap="round"/><line x1="1705.6" y1="188.0" x2="1709.9" y2="185.4" stroke="#1a1a1a" stroke-width="2.3" stroke-linecap="round"/><line x1="1710.3" y1="192.1" x2="1710.7" y2="191.9" stroke="#1a1a1a" stroke-width="2.3" stroke-linecap="round"/><line x1="1711.4" y1="204.0" x2="1716.4" y2="203.2" stroke="#1a1a1a" stroke-width="2.3" stroke-linecap="round"/><line x1="1717.7" y1="221.4" x2="1720.1" y2="221.9" stroke="#1a1a1a" stroke-width="2.3" stroke-linecap="round"/><line x1="1717.1" y1="227.5" x2="1717.5" y2="227.6" stroke="#1a1a1a" stroke-width="2.3" stroke-linecap="round"/><line x1="1660.0" y1="261.7" x2="1659.7" y2="264.2" stroke="#1a1a1a" stroke-width="2.3" stroke-linecap="round"/><line x1="1653.9" y1="261.5" x2="1653.8" y2="261.9" stroke="#1a1a1a" stroke-width="2.3" stroke-linecap="round"/><line x1="1648.1" y1="259.6" x2="1648.0" y2="260.0" stroke="#1a1a1a" stroke-width="2.3" stroke-linecap="round"/><line x1="1642.9" y1="256.5" x2="1642.2" y2="257.8" stroke="#1a1a1a" stroke-width="2.3" stroke-linecap="round"/><line x1="1619.4" y1="230.1" x2="1618.0" y2="230.6" stroke="#1a1a1a" stroke-width="2.3" stroke-linecap="round"/><line x1="1620.2" y1="223.6" x2="1613.4" y2="225.4" stroke="#1a1a1a" stroke-width="2.3" stroke-linecap="round"/><line x1="1615.8" y1="212.5" x2="1614.3" y2="212.5" stroke="#1a1a1a" stroke-width="2.3" stroke-linecap="round"/><line x1="1616.9" y1="206.5" x2="1613.5" y2="206.2" stroke="#1a1a1a" stroke-width="2.3" stroke-linecap="round"/><line x1="1616.3" y1="200.4" x2="1615.9" y2="200.3" stroke="#1a1a1a" stroke-width="2.3" stroke-linecap="round"/><line x1="1621.5" y1="189.5" x2="1618.4" y2="188.0" stroke="#1a1a1a" stroke-width="2.3" stroke-linecap="round"/><line x1="1651.6" y1="162.8" x2="1650.5" y2="159.5" stroke="#1a1a1a" stroke-width="2.3" stroke-linecap="round"/><line x1="1657.1" y1="160.3" x2="1656.8" y2="158.8" stroke="#1a1a1a" stroke-width="2.3" stroke-linecap="round"/><line x1="1663.0" y1="158.9" x2="1663.0" y2="158.5" stroke="#1a1a1a" stroke-width="2.3" stroke-linecap="round"/><line x1="1669.0" y1="160.3" x2="1669.1" y2="156.8" stroke="#1a1a1a" stroke-width="2.3" stroke-linecap="round"/><line x1="1675.1" y1="159.3" x2="1675.2" y2="158.9" stroke="#1a1a1a" stroke-width="2.3" stroke-linecap="round"/><line x1="1680.7" y1="162.0" x2="1681.6" y2="158.6" stroke="#1a1a1a" stroke-width="2.3" stroke-linecap="round"/><line x1="1691.3" y1="167.0" x2="1693.7" y2="162.6" stroke="#1a1a1a" stroke-width="2.3" stroke-linecap="round"/><line x1="1716.5" y1="197.9" x2="1719.9" y2="197.0" stroke="#1a1a1a" stroke-width="2.3" stroke-linecap="round"/><line x1="1718.7" y1="203.6" x2="1720.2" y2="203.3" stroke="#1a1a1a" stroke-width="2.3" stroke-linecap="round"/><line x1="1718.2" y1="209.6" x2="1721.7" y2="209.5" stroke="#1a1a1a" stroke-width="2.3" stroke-linecap="round"/><line x1="1725.3" y1="213.3" x2="1725.7" y2="213.3" stroke="#1a1a1a" stroke-width="2.3" stroke-linecap="round"/><line x1="1723.7" y1="219.1" x2="1726.1" y2="219.5" stroke="#1a1a1a" stroke-width="2.3" stroke-linecap="round"/><line x1="1722.5" y1="225.0" x2="1724.9" y2="225.6" stroke="#1a1a1a" stroke-width="2.3" stroke-linecap="round"/><line x1="1718.6" y1="229.9" x2="1725.2" y2="232.3" stroke="#1a1a1a" stroke-width="2.3" stroke-linecap="round"/><line x1="1717.9" y1="235.9" x2="1721.1" y2="237.4" stroke="#1a1a1a" stroke-width="2.3" stroke-linecap="round"/><line x1="1693.3" y1="260.1" x2="1695.7" y2="264.5" stroke="#1a1a1a" stroke-width="2.3" stroke-linecap="round"/><line x1="1688.5" y1="263.7" x2="1689.5" y2="266.0" stroke="#1a1a1a" stroke-width="2.3" stroke-linecap="round"/><line x1="1671.2" y1="268.1" x2="1671.3" y2="269.6" stroke="#1a1a1a" stroke-width="2.3" stroke-linecap="round"/><line x1="1665.2" y1="268.2" x2="1665.2" y2="269.7" stroke="#1a1a1a" stroke-width="2.3" stroke-linecap="round"/><line x1="1647.9" y1="264.2" x2="1647.0" y2="266.6" stroke="#1a1a1a" stroke-width="2.3" stroke-linecap="round"/><line x1="1617.3" y1="237.4" x2="1615.1" y2="238.6" stroke="#1a1a1a" stroke-width="2.3" stroke-linecap="round"/><line x1="1614.3" y1="232.2" x2="1612.9" y2="232.8" stroke="#1a1a1a" stroke-width="2.3" stroke-linecap="round"/><line x1="1610.5" y1="220.8" x2="1610.1" y2="220.9" stroke="#1a1a1a" stroke-width="2.3" stroke-linecap="round"/><line x1="1612.0" y1="196.9" x2="1610.6" y2="196.5" stroke="#1a1a1a" stroke-width="2.3" stroke-linecap="round"/><line x1="1614.3" y1="191.4" x2="1611.9" y2="190.5" stroke="#1a1a1a" stroke-width="2.3" stroke-linecap="round"/><line x1="1618.6" y1="186.9" x2="1612.3" y2="183.8" stroke="#1a1a1a" stroke-width="2.3" stroke-linecap="round"/><line x1="1620.6" y1="181.4" x2="1616.3" y2="178.7" stroke="#1a1a1a" stroke-width="2.3" stroke-linecap="round"/><line x1="1635.4" y1="162.9" x2="1635.2" y2="162.6" stroke="#1a1a1a" stroke-width="2.3" stroke-linecap="round"/><line x1="1640.8" y1="160.3" x2="1640.1" y2="159.0" stroke="#1a1a1a" stroke-width="2.3" stroke-linecap="round"/><line x1="1652.2" y1="156.9" x2="1651.3" y2="153.5" stroke="#1a1a1a" stroke-width="2.3" stroke-linecap="round"/><line x1="1663.8" y1="154.4" x2="1663.6" y2="151.9" stroke="#1a1a1a" stroke-width="2.3" stroke-linecap="round"/><line x1="1675.3" y1="157.1" x2="1676.3" y2="150.1" stroke="#1a1a1a" stroke-width="2.3" stroke-linecap="round"/><line x1="1681.7" y1="155.0" x2="1681.8" y2="154.6" stroke="#1a1a1a" stroke-width="2.3" stroke-linecap="round"/><line x1="1692.1" y1="161.2" x2="1694.3" y2="156.7" stroke="#1a1a1a" stroke-width="2.3" stroke-linecap="round"/><line x1="1697.1" y1="164.1" x2="1699.8" y2="159.8" stroke="#1a1a1a" stroke-width="2.3" stroke-linecap="round"/><line x1="1715.6" y1="178.9" x2="1715.9" y2="178.7" stroke="#1a1a1a" stroke-width="2.3" stroke-linecap="round"/><line x1="1715.7" y1="185.6" x2="1721.9" y2="182.4" stroke="#1a1a1a" stroke-width="2.3" stroke-linecap="round"/><line x1="1719.7" y1="190.2" x2="1723.0" y2="188.9" stroke="#1a1a1a" stroke-width="2.3" stroke-linecap="round"/><line x1="1720.9" y1="195.9" x2="1725.7" y2="194.6" stroke="#1a1a1a" stroke-width="2.3" stroke-linecap="round"/><line x1="1721.2" y1="201.8" x2="1728.1" y2="200.6" stroke="#1a1a1a" stroke-width="2.3" stroke-linecap="round"/><line x1="1724.1" y1="207.3" x2="1726.6" y2="207.1" stroke="#1a1a1a" stroke-width="2.3" stroke-linecap="round"/><circle cx="1630.2" cy="174.4" r="4.3" fill="none" stroke="#1a1a1a" stroke-width="1.7"/><circle cx="1630.2" cy="174.4" r="1.6" fill="#1a1a1a"/><circle cx="1704.3" cy="174.4" r="4.3" fill="none" stroke="#1a1a1a" stroke-width="1.7"/><circle cx="1704.3" cy="174.4" r="1.6" fill="#1a1a1a"/><circle cx="1630.2" cy="248.6" r="4.3" fill="none" stroke="#1a1a1a" stroke-width="1.7"/><circle cx="1630.2" cy="248.6" r="1.6" fill="#1a1a1a"/><defs><linearGradient id="cu" x1="0" y1="0" x2="1" y2="0.3"><stop offset="0" stop-color="#20b0b8"/><stop offset="0.45" stop-color="#2d9ee0"/><stop offset="1" stop-color="#1d3c98"/></linearGradient><linearGradient id="cd" x1="0" y1="0" x2="1" y2="0"><stop offset="0" stop-color="#6cc04a"/><stop offset="0.3" stop-color="#e64a1f"/><stop offset="0.65" stop-color="#f28a1e"/><stop offset="1" stop-color="#f6cf1a"/></linearGradient><clipPath id="cb"><rect x="1637.5" y="214" width="60" height="20"/></clipPath></defs><g transform="translate(1667.0,210.5)"><path d="M-14,17 C-23,17 -27,8 -23,1 C-20,-5 -14,-6 -10,-5 C-7,-14 2,-19 10,-16 C15,-14 18,-9 18,-6 C24,-5 27,1 26,7 C25,13 20,17 14,17 Z" fill="url(#cu)"/></g><g clip-path="url(#cb)"><g transform="translate(1667.0,210.5)"><path d="M-14,17 C-23,17 -27,8 -23,1 C-20,-5 -14,-6 -10,-5 C-7,-14 2,-19 10,-16 C15,-14 18,-9 18,-6 C24,-5 27,1 26,7 C25,13 20,17 14,17 Z" fill="url(#cd)"/></g></g><g transform="translate(1666.0,210)"><path d="M-10,9 C-15,9 -17,4 -15,1 C-13,-2 -10,-2 -8,-1.5 C-6,-7 0,-10 5,-8 C9,-6.5 10,-3 10,-1 C14,-1 16,2 15,5 C14,8 12,9 9,9 Z" fill="#fff"/></g><circle cx="1705.0" cy="248.6" r="11.5" fill="#2ea84a"/><path d="M1700.0,251.6 C1698.0,255.6 1704.0,255.6 1705.0,249.6 C1706.0,243.6 1712.0,242.6 1710.0,246.6" fill="none" stroke="#fff" stroke-width="2.6" stroke-linecap="round"/></svg><div style="position:absolute;left:1595px;top:629px;width:300px;height:180px;overflow:hidden;background:#e3ecf7">
<svg width="300" height="180" style="position:absolute;left:0;top:0">
<defs>
<linearGradient id="bbg" x1="0" y1="0" x2="1" y2="1"><stop offset="0" stop-color="#d6e5f8"/><stop offset="0.5" stop-color="#e9eff8"/><stop offset="1" stop-color="#e4ebf5"/></linearGradient>
<linearGradient id="rib" x1="0" y1="0" x2="0" y2="1"><stop offset="0" stop-color="#4f9cff"/><stop offset="1" stop-color="#2b72ec"/></linearGradient>
<linearGradient id="pants" x1="0" y1="0" x2="1" y2="1"><stop offset="0" stop-color="#f7a83a"/><stop offset="1" stop-color="#ef8a22"/></linearGradient>
<filter id="fs" x="-20%" y="-20%" width="140%" height="160%"><feDropShadow dx="0" dy="3" stdDeviation="2.5" flood-color="#3a5a90" flood-opacity="0.35"/></filter>
</defs>
<rect width="300" height="180" fill="url(#bbg)"/>
<path d="M0,40 L120,0 L175,0 L0,110 Z" fill="#eef4fb" opacity="0.8"/>
<path d="M95,0 L175,0 L300,120 L300,180 L180,180 Z" fill="#f1f4f9" opacity="0.7"/>
<circle cx="60" cy="150" r="45" fill="#dde9f8"/>
<ellipse cx="300" cy="75" rx="38" ry="55" fill="#d6e4f6"/>
<path d="M0,0 H60 L0,30Z" fill="#d2e2f7"/>
<!-- scooter front fork -->
<path d="M126,121 L140,121 L128,180 L110,180 Z" fill="#e6a52e"/>
<path d="M113,108 L135,103 L152,110 L150,119 L128,121 L116,117 Z" fill="#dca030"/>
<circle cx="130" cy="109" r="5" fill="#c88a20"/>
<rect x="150" y="114" width="8" height="4" rx="2" fill="#2a2a2a"/>
<!-- rear body -->
<path d="M196,166 Q196,158 206,158 H262 Q272,158 272,168 V180 H194 Z" fill="#e9642e"/>
<path d="M204,170 H272 V180 H200 Z" fill="#f4a235"/>
<!-- seat -->
<rect x="201" y="133" width="93" height="29" rx="13" fill="#232323"/>
<!-- pants / legs -->
<path d="M232,118 Q236,152 200,154 L178,158 L176,180 L152,180 L156,150 L145,138 Q148,118 180,116 Z" fill="url(#pants)"/>
<!-- torso -->
<path d="M178,118 V85 Q178,58 205,58 Q232,58 232,85 V118 Z" fill="#e85a36"/>
<path d="M178,117 H232" stroke="#f2b43a" stroke-width="2"/>
<!-- lower arm -->
<path d="M182,104 L156,117" stroke="#eebf9e" stroke-width="4.5" stroke-linecap="round"/>
<!-- upper arm -->
<path d="M190,66 L157,45" stroke="#eebf9e" stroke-width="5" stroke-linecap="round"/>
<!-- head -->
<ellipse cx="203" cy="46" rx="11" ry="12.5" fill="#f0c6a6"/>
<path d="M196,36 Q204,28 214,34 Q220,44 214,54 Q212,44 200,40 Z" fill="#1e1e1e"/>
<circle cx="222" cy="33" r="6.5" fill="#1e1e1e"/><circle cx="229" cy="31" r="4.5" fill="#1e1e1e"/>
<!-- box -->
<rect x="234" y="85" width="70" height="50" rx="5" fill="#f0652a"/>
<rect x="240" y="93" width="24.5" height="24.5" rx="4" fill="#fff3b0"/>
<path d="M246,112 L247,97 L251,99 L252,104 L255,97 L258,99 L257,112 Z" fill="#f2c21a"/>
<rect x="267.5" y="93" width="25" height="24.5" rx="4" fill="#27a8f0"/>
<circle cx="280" cy="104" r="6" fill="none" stroke="#fff" stroke-width="2.3"/>
<rect x="270" y="112" width="20" height="4" fill="#dff2fd"/>
</svg>
<div class="t" style="left:17px;top:24px;font-size:35px;line-height:40px;font-weight:900;color:#2d7af2;letter-spacing:0.3px;-webkit-text-stroke:0.6px #2d7af2;text-shadow:0 5px 5px rgba(40,70,130,0.35),-1px -1px 0 #fff">零售行业</div>
<div style="position:absolute;left:12px;top:73px;width:206px;height:27px;background:linear-gradient(180deg,#519dff,#2a70ec);border-radius:4px;box-shadow:0 3px 5px rgba(20,60,140,0.3)"></div>
<div class="t" style="left:18px;top:73px;font-size:19px;line-height:27px;font-weight:bold;color:#fff;letter-spacing:0px">正式对接聚合外卖平台</div>
<div class="t" style="left:236px;top:118px;font-size:10px;line-height:12px;font-weight:bold;color:#fff;letter-spacing:0.5px">聚·合·外·卖</div>
<div style="position:absolute;left:94px;top:144px;width:20px;height:2px;background:rgba(255,255,255,0.45)"></div>
<div style="position:absolute;left:121px;top:144px;width:30px;height:3px;background:#fff"></div>
<div style="position:absolute;left:159px;top:144px;width:20px;height:2px;background:rgba(255,255,255,0.45)"></div>
<div style="position:absolute;left:186px;top:144px;width:20px;height:2px;background:rgba(255,255,255,0.45)"></div>
</div><svg style="position:absolute;left:1909.5px;top:746px" width="11" height="59"><rect x="0.5" y="0.5" width="14" height="58" rx="3" fill="#4e535c" stroke="#33373e" stroke-width="1"/><rect x="3.5" y="7.00" width="4.5" height="1.2" fill="#3a3f48"/><rect x="3.5" y="9.45" width="4.5" height="1.2" fill="#3a3f48"/><rect x="3.5" y="11.90" width="4.5" height="1.2" fill="#3a3f48"/><rect x="3.5" y="14.35" width="4.5" height="1.2" fill="#3a3f48"/><rect x="3.5" y="16.80" width="4.5" height="1.2" fill="#e89a40"/><rect x="3.5" y="19.25" width="4.5" height="1.2" fill="#eda540"/><rect x="3.5" y="21.70" width="4.5" height="1.2" fill="#f0b540"/><rect x="3.5" y="24.15" width="4.5" height="1.2" fill="#f0c040"/><rect x="3.5" y="26.60" width="4.5" height="1.2" fill="#e8c840"/><rect x="3.5" y="29.05" width="4.5" height="1.2" fill="#d8d040"/><rect x="3.5" y="31.50" width="4.5" height="1.2" fill="#c8d048"/><rect x="3.5" y="33.95" width="4.5" height="1.2" fill="#b0d050"/><rect x="3.5" y="36.40" width="4.5" height="1.2" fill="#98d060"/><rect x="3.5" y="38.85" width="4.5" height="1.2" fill="#80d070"/><rect x="3.5" y="41.30" width="4.5" height="1.2" fill="#70d088"/><rect x="3.5" y="43.75" width="4.5" height="1.2" fill="#60d0a0"/><rect x="3.5" y="46.20" width="4.5" height="1.2" fill="#58d0b0"/><rect x="3.5" y="48.65" width="4.5" height="1.2" fill="#50d0c0"/></svg><div style="position:absolute;left:230px;top:509px;width:1189px;height:284px;background:#fff;border-radius:4px;box-shadow:0 8px 40px rgba(0,0,0,0.16)"></div><svg style="position:absolute;left:214px;top:518px" width="18" height="30" viewBox="0 0 18 30"><rect x="5" y="6.3" width="11" height="19.5" fill="rgba(110,125,150,0.07)"/><path d="M16.5,6.3 L6,16.2 L16.5,25.8Z" fill="#fff"/></svg><div class="t" style="left:250px;top:530.8px;font-size:18.5px;line-height:18.5px;color:#222;font-weight:bold;">库存业务</div><div class="t" style="left:250px;top:563.8px;font-size:17.5px;line-height:17.5px;color:#333;font-weight:normal;">领用单</div><div class="t" style="left:250px;top:601.4px;font-size:17.5px;line-height:17.5px;color:#333;font-weight:normal;">报损单</div><div class="t" style="left:250px;top:639.0px;font-size:17.5px;line-height:17.5px;color:#333;font-weight:normal;">组合拆分单</div><div class="t" style="left:250px;top:676.7px;font-size:17.5px;line-height:17.5px;color:#333;font-weight:normal;">库存调整单</div><div class="t" style="left:250px;top:714.4px;font-size:17.5px;line-height:17.5px;color:#333;font-weight:normal;">成本调价单</div><div class="t" style="left:250px;top:752.0px;font-size:17.5px;line-height:17.5px;color:#333;font-weight:normal;">转仓单</div><div style="position:absolute;left:424.5px;top:523px;width:0;height:255px;border-left:1px dashed #d0d0d0"></div><div class="t" style="left:445px;top:530.8px;font-size:18.5px;line-height:18.5px;color:#222;font-weight:bold;">盘点业务</div><div class="t" style="left:445px;top:563.8px;font-size:17.5px;line-height:17.5px;color:#333;font-weight:normal;">盘点批号</div><div class="t" style="left:445px;top:601.4px;font-size:17.5px;line-height:17.5px;color:#333;font-weight:normal;">预盘单</div><div class="t" style="left:445px;top:639.0px;font-size:17.5px;line-height:17.5px;color:#333;font-weight:normal;">库存盘点单</div><div class="t" style="left:445px;top:676.7px;font-size:17.5px;line-height:17.5px;color:#333;font-weight:normal;">盘点差异</div><div class="t" style="left:445px;top:714.4px;font-size:17.5px;line-height:17.5px;color:#333;font-weight:normal;">盘点报表</div><div class="t" style="left:445px;top:752.0px;font-size:17.5px;line-height:17.5px;color:#333;font-weight:normal;">盘点汇总</div><div style="position:absolute;left:619.5px;top:523px;width:0;height:255px;border-left:1px dashed #d0d0d0"></div><div class="t" style="left:640px;top:530.8px;font-size:18.5px;line-height:18.5px;color:#222;font-weight:bold;">业务查询</div><div class="t" style="left:640px;top:563.8px;font-size:17.5px;line-height:17.5px;color:#333;font-weight:normal;">领用查询</div><div class="t" style="left:640px;top:601.4px;font-size:17.5px;line-height:17.5px;color:#333;font-weight:normal;">报损查询</div><div class="t" style="left:640px;top:639.0px;font-size:17.5px;line-height:17.5px;color:#333;font-weight:normal;">库存调整查询</div><div class="t" style="left:640px;top:676.7px;font-size:17.5px;line-height:17.5px;color:#333;font-weight:normal;">成本调价查询</div><div style="position:absolute;left:814.5px;top:523px;width:0;height:255px;border-left:1px dashed #d0d0d0"></div><div class="t" style="left:835px;top:530.8px;font-size:18.5px;line-height:18.5px;color:#222;font-weight:bold;">库存查询</div><div class="t" style="left:835px;top:563.8px;font-size:17.5px;line-height:17.5px;color:#333;font-weight:normal;">库存汇总</div><div class="t" style="left:835px;top:601.4px;font-size:17.5px;line-height:17.5px;color:#333;font-weight:normal;">库存查询</div><div class="t" style="left:835px;top:639.0px;font-size:17.5px;line-height:17.5px;color:#333;font-weight:normal;">库存分布查询</div><div class="t" style="left:835px;top:676.7px;font-size:17.5px;line-height:17.5px;color:#333;font-weight:normal;">出入库汇总报表</div><div class="t" style="left:835px;top:714.4px;font-size:17.5px;line-height:17.5px;color:#333;font-weight:normal;">出入库明细报表</div><div style="position:absolute;left:1009.5px;top:523px;width:0;height:255px;border-left:1px dashed #d0d0d0"></div><div class="t" style="left:1030px;top:530.8px;font-size:18.5px;line-height:18.5px;color:#222;font-weight:bold;">进销存报表</div><div class="t" style="left:1030px;top:563.8px;font-size:17.5px;line-height:17.5px;color:#333;font-weight:normal;">月结</div><div class="t" style="left:1030px;top:601.4px;font-size:17.5px;line-height:17.5px;color:#333;font-weight:normal;">进销存月报</div><div class="t" style="left:1030px;top:639.0px;font-size:17.5px;line-height:17.5px;color:#333;font-weight:normal;">进销存日报</div><div style="position:absolute;left:1204.5px;top:523px;width:0;height:255px;border-left:1px dashed #d0d0d0"></div><div class="t" style="left:1225px;top:530.8px;font-size:18.5px;line-height:18.5px;color:#222;font-weight:bold;">批次业务</div><div class="t" style="left:1225px;top:563.8px;font-size:17.5px;line-height:17.5px;color:#333;font-weight:normal;">批次有效期查询</div><div class="t" style="left:1225px;top:601.4px;font-size:17.5px;line-height:17.5px;color:#333;font-weight:normal;">批次库存结存</div><div class="t" style="left:1225px;top:639.0px;font-size:17.5px;line-height:17.5px;color:#333;font-weight:normal;">待冲销批次查询</div><div class="t" style="left:1225px;top:676.7px;font-size:17.5px;line-height:17.5px;color:#333;font-weight:normal;">批次出库查询</div><div class="t" style="left:1225px;top:714.4px;font-size:17.5px;line-height:17.5px;color:#333;font-weight:normal;">批次出入汇总</div>
</body></html>
